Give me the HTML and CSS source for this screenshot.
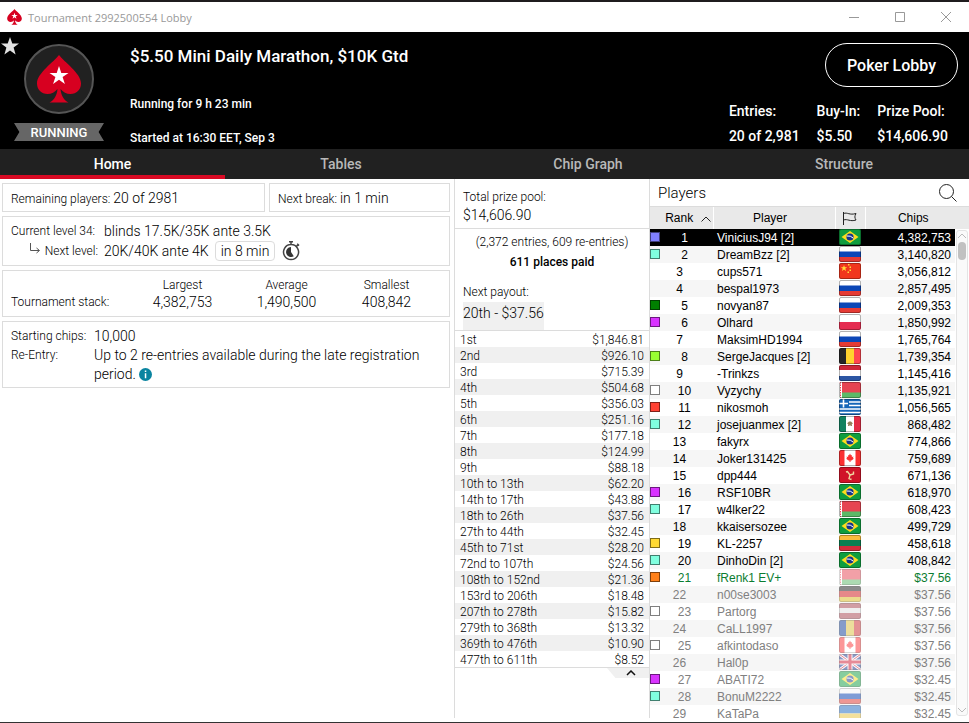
FILE: index.html
```html
<!DOCTYPE html>
<html lang="en">
<head>
<meta charset="utf-8">
<title>Tournament 2992500554 Lobby</title>
<link rel="stylesheet" href="styles.css">
</head>
<body>
<svg class="defs" aria-hidden="true">
  <symbol id="spade" viewBox="0 0 44 48"><path fill="#d70020" d="M22 0C17 7 0 18 0 28.500c0 6 4.500 10.500 10.500 10.500 4 0 7.500-2 10-5-.5 6-3 11-8 13.500h19c-5-2.500-7.500-7.500-8-13.500 2.500 3 6 5 10 5C39.500 39 44 34.500 44 28.500 44 18 27 7 22 0z"/><path fill="#fff" d="M22 11l2.300 6.900h7.200l-5.900 4.200 2.300 6.900-5.900-4.300-5.900 4.300 2.300-6.900-5.900-4.200h7.200z"/></symbol>
  <symbol id="br" viewBox="0 0 22 16"><path fill="#0f9d3f" d="M0 0h22v16H0z"/><path fill="#fddc1d" d="M11 2l8.500 6-8.500 6-8.500-6z"/><circle cx="11" cy="8" r="3.600" fill="#17348c"/><path d="M7.600 7q4-.7 6.800 2.200" stroke="#fff" fill="none"/></symbol>
  <symbol id="ru" viewBox="0 0 22 16"><path fill="#fff" d="M0 0h22v6H0z"/><path fill="#0c47b7" d="M0 5.500h22V11H0z"/><path fill="#e53b35" d="M0 11h22v5H0z"/></symbol>
  <symbol id="cn" viewBox="0 0 22 16"><path fill="#f1361d" d="M0 0h22v16H0z"/><path fill="#ffde3a" d="M5 2l.8 2.200h2.400L6.300 5.600 7 8 5 6.600 3 8l.7-2.400L1.800 4.200h2.400zM9 1h1.500v1.500H9zM10.500 3.500H12V5h-1.500zM10.500 6.500H12V8h-1.500zM8.500 8.500H10V10H8.500z"/></symbol>
  <symbol id="pl" viewBox="0 0 22 16"><path fill="#fff" d="M0 0h22v8H0z"/><path fill="#e52c50" d="M0 8h22v8H0z"/></symbol>
  <symbol id="be" viewBox="0 0 22 16"><path fill="#262626" d="M0 0h8v16H0z"/><path fill="#ffd22e" d="M7 0h8v16H7z"/><path fill="#ff4550" d="M15 0h7v16h-7z"/></symbol>
  <symbol id="nl" viewBox="0 0 22 16"><path fill="#cc2638" d="M0 0h22v5H0z"/><path fill="#fff" d="M0 5h22v6H0z"/><path fill="#2c56a4" d="M0 11h22v5H0z"/></symbol>
  <symbol id="by" viewBox="0 0 22 16"><path fill="#e64452" d="M0 0h22v11H0z"/><path fill="#5cb967" d="M0 10.500h22V16H0z"/><path fill="#fff" d="M0 0h3v16H0z"/><path d="M1.500 0v16" stroke="#e64452" stroke-dasharray="1.500 1"/></symbol>
  <symbol id="gr" viewBox="0 0 22 16"><path fill="#1767b8" d="M0 0h22v16H0z"/><path stroke="#fff" stroke-width="1.600" d="M10 3h12M10 6.500h12M0 10h22M0 13.500h22M0 4.500h9M4.500 0v8.500"/></symbol>
  <symbol id="mx" viewBox="0 0 22 16"><path fill="#128260" d="M0 0h7v16H0z"/><path fill="#fff" d="M7 0h8v16H7z"/><path fill="#e22c45" d="M15 0h7v16h-7z"/><path fill="#94805c" d="M10 5.500h2l2 2-1.200.5.200 2h-1.200L11 9l-.8 1H9l.2-2L8 7.500z"/></symbol>
  <symbol id="ca" viewBox="0 0 22 16"><path fill="#fa3032" d="M0 0h22v16H0z"/><path fill="#fff" d="M5.500 0h11v16h-11z"/><path fill="#fa3032" d="M11 3.500l1 2 1-.5-.2 2 1.700-.5-.5 1.500.8.8-2.300 1.600h-1V12h-1v-1.600h-1L7.200 8.800 8 8l-.5-1.500 1.700.5L9 5l1 .5z"/></symbol>
  <symbol id="im" viewBox="0 0 22 16"><path fill="#d01329" d="M0 0h22v16H0z"/><path d="M11 8L8.500 4.500 7 5M11 8l3.500-1V4.500M11 8l-1 3.500 2.500 1" fill="none" stroke="#f0d5a0" stroke-width="1.400"/></symbol>
  <symbol id="lt" viewBox="0 0 22 16"><path fill="#fabc3d" d="M0 0h22v5H0z"/><path fill="#0b8052" d="M0 5h22v6H0z"/><path fill="#d22e3b" d="M0 11h22v5H0z"/></symbol>
  <symbol id="de" viewBox="0 0 22 16"><path fill="#222" d="M0 0h22v5H0z"/><path fill="#d81e1e" d="M0 5h22v6H0z"/><path fill="#e3c324" d="M0 11h22v5H0z"/></symbol>
  <symbol id="lv" viewBox="0 0 22 16"><path fill="#a4404c" d="M0 0h22v16H0z"/><path fill="#e0e0e0" d="M0 5h22v5H0z"/></symbol>
  <symbol id="ro" viewBox="0 0 22 16"><path fill="#1545a0" d="M0 0h7v16H0z"/><path fill="#e3c845" d="M7 0h8v16H7z"/><path fill="#d43035" d="M15 0h7v16h-7z"/></symbol>
  <symbol id="gb" viewBox="0 0 22 16"><path fill="#213c95" d="M0 0h22v16H0z"/><path stroke="#fff" stroke-width="3" d="M0 0l22 16M22 0L0 16"/><path stroke="#d8203a" d="M0 0l22 16M22 0L0 16"/><path stroke="#fff" stroke-width="5" d="M11 0v16M0 8h22"/><path stroke="#d8203a" stroke-width="3" d="M11 0v16M0 8h22"/></symbol>
  <symbol id="ua" viewBox="0 0 22 16"><path fill="#1a68c0" d="M0 0h22v8.500H0z"/><path fill="#e8c23a" d="M0 8.500h22V16H0z"/></symbol>
</svg>
<div class="window">
  <div class="titlebar">
    <svg class="title-icon"><use href="#spade"/></svg>
    <span class="title-text">Tournament 2992500554 Lobby</span>
    <button class="win-btn" aria-label="Minimize"><svg viewBox="0 0 12 12"><path d="M1 6.500h10"/></svg></button>
    <button class="win-btn" aria-label="Maximize"><svg viewBox="0 0 12 12"><path d="M1.500 1.500h9v9h-9z"/></svg></button>
    <button class="win-btn" aria-label="Close"><svg viewBox="0 0 12 12"><path d="M1 1l10 10M11 1L1 11"/></svg></button>
  </div>

  <header class="header">
    <button class="favorite" aria-label="Favorite"><svg viewBox="0 0 18 18"><path fill="#e2e2e2" d="M9 0l2.300 6.500H18l-5.400 4.100 2 6.900L9 13.400l-5.600 4.100 2-6.900L0 6.500h6.700z"/></svg></button>
    <div class="badge">
      <div class="emblem"><svg><use href="#spade"/></svg></div>
      <div class="ribbon">RUNNING</div>
    </div>
    <div class="summary">
      <h1>$5.50 Mini Daily Marathon, $10K Gtd</h1>
      <p>Running for 9 h 23 min</p>
      <p>Started at 16:30 EET, Sep 3</p>
    </div>
    <div class="header-right">
      <button class="lobby-btn">Poker Lobby</button>
      <dl class="stats">
        <div><dt>Entries:</dt><dd>20 of 2,981</dd></div>
        <div><dt>Buy-In:</dt><dd>$5.50</dd></div>
        <div><dt>Prize Pool:</dt><dd>$14,606.90</dd></div>
      </dl>
    </div>
  </header>

  <nav class="tabs">
    <a class="active" href="#home">Home</a>
    <a href="#tables">Tables</a>
    <a href="#graph">Chip Graph</a>
    <a href="#structure">Structure</a>
  </nav>

  <main class="content">
    <section class="info">
      <div class="pair">
        <div class="card line">Remaining players: <b>20 of 2981</b></div>
        <div class="card line">Next break: <b>in 1 min</b></div>
      </div>
      <div class="card levels">
        <span class="lbl">Current level 34:</span><b>blinds 17.5K/35K ante 3.5K</b>
        <span class="lbl next"><svg viewBox="0 0 12 12"><path d="M1.500 0v7.500H10M7.500 5l3 2.500-3 2.500"/></svg>Next level:</span>
        <div class="next-value"><b>20K/40K ante 4K</b><b class="chip">in 8 min</b>
          <svg class="clock" viewBox="0 0 18 20"><path fill="none" stroke="#444" stroke-width="1.500" d="M9 3.500a7.500 7.500 0 1 0 .1 0zM9 3.500V1M7 .8h4M14.500 5.500l1.800-1.800M15.200 2.800l1.800 1.800"/><path fill="#333" d="M9 6v5l2.800 4.200A5 5 0 1 1 9 6z"/></svg>
        </div>
      </div>
      <div class="card stack">
        <span></span><span>Largest</span><span>Average</span><span>Smallest</span>
        <span class="lbl">Tournament stack:</span><b>4,382,753</b><b>1,490,500</b><b>408,842</b>
      </div>
      <div class="card entry">
        <span class="lbl">Starting chips:</span><b>10,000</b>
        <span class="lbl">Re-Entry:</span>
        <b>Up to 2 re-entries available during the late registration period. <svg class="info-icon" viewBox="0 0 13 13"><circle cx="6.500" cy="6.500" r="6.500" fill="#0a84a0"/><path fill="#fff" d="M5.800 2.500h1.500V4H5.800zM5.800 5.200h1.500v5H5.800z"/></svg></b>
      </div>
    </section>

    <section class="prizes">
      <div class="pool"><span>Total prize pool:</span><b>$14,606.90</b></div>
      <div class="places">
        <p class="mid">(2,372 entries, 609 re-entries)</p>
        <p class="mid strong">611 places paid</p>
        <p class="payout-label">Next payout:</p>
        <b class="payout">20th - $37.56</b>
      </div>
      <table class="payouts">
        <tbody>
        <tr><td>1st</td><td>$1,846.81</td></tr>
        <tr><td>2nd</td><td>$926.10</td></tr>
        <tr><td>3rd</td><td>$715.39</td></tr>
        <tr><td>4th</td><td>$504.68</td></tr>
        <tr><td>5th</td><td>$356.03</td></tr>
        <tr><td>6th</td><td>$251.16</td></tr>
        <tr><td>7th</td><td>$177.18</td></tr>
        <tr><td>8th</td><td>$124.99</td></tr>
        <tr><td>9th</td><td>$88.18</td></tr>
        <tr><td>10th to 13th</td><td>$62.20</td></tr>
        <tr><td>14th to 17th</td><td>$43.88</td></tr>
        <tr><td>18th to 26th</td><td>$37.56</td></tr>
        <tr><td>27th to 44th</td><td>$32.45</td></tr>
        <tr><td>45th to 71st</td><td>$28.20</td></tr>
        <tr><td>72nd to 107th</td><td>$24.56</td></tr>
        <tr><td>108th to 152nd</td><td>$21.36</td></tr>
        <tr><td>153rd to 206th</td><td>$18.48</td></tr>
        <tr><td>207th to 278th</td><td>$15.82</td></tr>
        <tr><td>279th to 368th</td><td>$13.32</td></tr>
        <tr><td>369th to 476th</td><td>$10.90</td></tr>
        <tr><td>477th to 611th</td><td>$8.52</td></tr>
        </tbody>
      </table>
      <button class="collapse" aria-label="Collapse payouts"><svg viewBox="0 0 10 6"><path d="M1 5l4-4 4 4"/></svg></button>
    </section>

    <section class="players">
      <div class="players-head">
        <h2>Players</h2>
        <button aria-label="Search players"><svg viewBox="0 0 18 18"><circle cx="7.500" cy="7.500" r="7"/><path d="M12.500 12.500l5 5"/></svg></button>
      </div>
      <div class="list">
        <table>
          <colgroup><col class="c-rank"><col class="c-name"><col class="c-flag"><col><col class="c-bar"></colgroup>
          <thead><tr>
            <th class="th-rank">Rank <svg viewBox="0 0 10 6"><path d="M.5 5.500L5 1l4.500 4.500"/></svg></th>
            <th class="th-name">Player</th>
            <th><svg class="flag-head" viewBox="0 0 14 13"><path d="M.5 0v13M.5 1.500c4-1.500 6 2 12.500 0-1.500 3-1.500 4 0 6.500-6 2-8.500-1.500-12.500 0"/></svg></th>
            <th class="th-chips" colspan="2">Chips</th>
          </tr></thead>
          <tbody>
          <tr class="selected"><td><div class="rank"><i class="blue"></i><span>1</span></div></td><td>ViniciusJ94 [2]</td><td><svg class="flag"><use href="#br"/></svg></td><td>4,382,753</td></tr>
          <tr><td><div class="rank"><i class="aqua"></i><span>2</span></div></td><td>DreamBzz [2]</td><td><svg class="flag"><use href="#ru"/></svg></td><td>3,140,820</td></tr>
          <tr><td><div class="rank"><span>3</span></div></td><td>cups571</td><td><svg class="flag"><use href="#cn"/></svg></td><td>3,056,812</td></tr>
          <tr><td><div class="rank"><span>4</span></div></td><td>bespal1973</td><td><svg class="flag"><use href="#ru"/></svg></td><td>2,857,495</td></tr>
          <tr><td><div class="rank"><i class="green"></i><span>5</span></div></td><td>novyan87</td><td><svg class="flag"><use href="#ru"/></svg></td><td>2,009,353</td></tr>
          <tr><td><div class="rank"><i class="purple"></i><span>6</span></div></td><td>Olhard</td><td><svg class="flag"><use href="#pl"/></svg></td><td>1,850,992</td></tr>
          <tr><td><div class="rank"><span>7</span></div></td><td>MaksimHD1994</td><td><svg class="flag"><use href="#ru"/></svg></td><td>1,765,764</td></tr>
          <tr><td><div class="rank"><i class="lime"></i><span>8</span></div></td><td>SergeJacques [2]</td><td><svg class="flag"><use href="#be"/></svg></td><td>1,739,354</td></tr>
          <tr><td><div class="rank"><span>9</span></div></td><td>-Trinkzs</td><td><svg class="flag"><use href="#nl"/></svg></td><td>1,145,416</td></tr>
          <tr><td><div class="rank"><i class="white"></i><span>10</span></div></td><td>Vyzychy</td><td><svg class="flag"><use href="#by"/></svg></td><td>1,135,921</td></tr>
          <tr><td><div class="rank"><i class="red"></i><span>11</span></div></td><td>nikosmoh</td><td><svg class="flag"><use href="#gr"/></svg></td><td>1,056,565</td></tr>
          <tr><td><div class="rank"><i class="aqua"></i><span>12</span></div></td><td>josejuanmex [2]</td><td><svg class="flag"><use href="#mx"/></svg></td><td>868,482</td></tr>
          <tr><td><div class="rank"><span>13</span></div></td><td>fakyrx</td><td><svg class="flag"><use href="#br"/></svg></td><td>774,866</td></tr>
          <tr><td><div class="rank"><span>14</span></div></td><td>Joker131425</td><td><svg class="flag"><use href="#ca"/></svg></td><td>759,689</td></tr>
          <tr><td><div class="rank"><span>15</span></div></td><td>dpp444</td><td><svg class="flag"><use href="#im"/></svg></td><td>671,136</td></tr>
          <tr><td><div class="rank"><i class="purple"></i><span>16</span></div></td><td>RSF10BR</td><td><svg class="flag"><use href="#br"/></svg></td><td>618,970</td></tr>
          <tr><td><div class="rank"><i class="aqua"></i><span>17</span></div></td><td>w4lker22</td><td><svg class="flag"><use href="#by"/></svg></td><td>608,423</td></tr>
          <tr><td><div class="rank"><span>18</span></div></td><td>kkaisersozee</td><td><svg class="flag"><use href="#br"/></svg></td><td>499,729</td></tr>
          <tr><td><div class="rank"><i class="yellow"></i><span>19</span></div></td><td>KL-2257</td><td><svg class="flag"><use href="#lt"/></svg></td><td>458,618</td></tr>
          <tr><td><div class="rank"><i class="aqua"></i><span>20</span></div></td><td>DinhoDin [2]</td><td><svg class="flag"><use href="#br"/></svg></td><td>408,842</td></tr>
          <tr class="out me"><td><div class="rank"><i class="orange"></i><span>21</span></div></td><td>fRenk1 EV+</td><td><svg class="flag"><use href="#by"/></svg></td><td>$37.56</td></tr>
          <tr class="out"><td><div class="rank"><span>22</span></div></td><td>n00se3003</td><td><svg class="flag"><use href="#de"/></svg></td><td>$37.56</td></tr>
          <tr class="out"><td><div class="rank"><i class="white"></i><span>23</span></div></td><td>Partorg</td><td><svg class="flag"><use href="#lv"/></svg></td><td>$37.56</td></tr>
          <tr class="out"><td><div class="rank"><span>24</span></div></td><td>CaLL1997</td><td><svg class="flag"><use href="#ro"/></svg></td><td>$37.56</td></tr>
          <tr class="out"><td><div class="rank"><i class="white"></i><span>25</span></div></td><td>afkintodaso</td><td><svg class="flag"><use href="#ca"/></svg></td><td>$37.56</td></tr>
          <tr class="out"><td><div class="rank"><span>26</span></div></td><td>Hal0p</td><td><svg class="flag"><use href="#gb"/></svg></td><td>$37.56</td></tr>
          <tr class="out"><td><div class="rank"><i class="purple"></i><span>27</span></div></td><td>ABATI72</td><td><svg class="flag"><use href="#br"/></svg></td><td>$32.45</td></tr>
          <tr class="out"><td><div class="rank"><i class="aqua"></i><span>28</span></div></td><td>BonuM2222</td><td><svg class="flag"><use href="#ru"/></svg></td><td>$32.45</td></tr>
          <tr class="out"><td><div class="rank"><span>29</span></div></td><td>KaTaPa</td><td><svg class="flag"><use href="#ua"/></svg></td><td>$32.45</td></tr>
          </tbody>
        </table>
        <div class="scrollbar">
          <svg viewBox="0 0 10 6"><path d="M1 5l4-4 4 4"/></svg>
          <div class="thumb"></div>
          <svg viewBox="0 0 10 6"><path d="M1 1l4 4 4-4"/></svg>
        </div>
      </div>
    </section>
  </main>
</div>
</body>
</html>
```
FILE: styles.css
```css
* { box-sizing: border-box; }
body { margin: 0; font-family: Roboto, "Liberation Sans", sans-serif; font-size: 12px; color: #000; }
h1, h2, p, dl, dd { margin: 0; font-weight: inherit; }
button { margin: 0; padding: 0; border: 0; background: none; color: inherit; font: inherit; }
svg { display: block; }
a { color: inherit; text-decoration: none; }
table { border-collapse: collapse; width: 100%; }
td, th { padding: 0; font-weight: inherit; }
.defs { position: absolute; width: 0; height: 0; }

.window { height: 100vh; display: flex; flex-direction: column; background: #fff; border-top: 2px solid #1f1c1e; border-bottom: 1px solid #333; }

.titlebar { display: flex; align-items: center; height: 30px; flex: none; padding-left: 7px; color: #999; font: 11px "Open Sans", sans-serif; }
.title-icon { width: 15px; height: 16px; margin-right: 6px; }
.title-text { flex: 1; }
.win-btn { width: 46px; height: 30px; display: grid; place-items: center; }
.win-btn svg { width: 12px; height: 12px; fill: none; stroke: #999; }

.header { position: relative; display: flex; height: 117px; flex: none; background: #000; color: #fff; font-weight: 500; }
.favorite { position: absolute; left: 1px; top: 5px; }
.favorite svg { width: 18px; height: 18px; }
.badge { width: 118px; padding-top: 12px; display: flex; flex-direction: column; align-items: center; gap: 9px; }
.emblem { width: 70px; height: 70px; border: 2px solid #555; border-radius: 50%; background: #212121; display: grid; place-items: center; }
.emblem svg { width: 44px; height: 48px; }
.ribbon { width: 90px; height: 18px; background: #666; clip-path: polygon(0 0, 100% 0, 94% 50%, 100% 100%, 0 100%, 6% 50%); text-align: center; font-size: 13px; line-height: 19px; }
.summary { flex: 1; padding: 14px 0 0 12px; }
.summary h1 { font-size: 17px; line-height: 20px; margin-bottom: 28px; }
.summary p { line-height: 20px; margin-bottom: 14px; }
.header-right { display: flex; flex-direction: column; align-items: flex-end; padding: 11px 11px 0 0; }
.lobby-btn { width: 133px; height: 44px; border: 1px solid #fff; border-radius: 22px; font-size: 16px; }
.stats { display: flex; gap: 17px; padding-right: 10px; font-size: 14px; line-height: 25px; margin-top: 12px; }

.tabs { display: grid; grid-template-columns: 225fr 232fr 262fr 250fr; flex: none; height: 30px; background: #212121; color: #b8b8b8; font-weight: 500; font-size: 14px; line-height: 30px; text-align: center; }
.tabs .active { color: #fff; box-shadow: inset 0 -4px #d90a24; }

.content { flex: 1; min-height: 0; display: grid; grid-template-columns: minmax(0, 1fr) 196px 319px; font-weight: 300; padding-bottom: 4px; }
.content b { font-weight: 300; font-size: 14px; }

.info { padding: 4px 4px 0 2px; display: flex; flex-direction: column; gap: 4px; }
.card { border: 1px solid #dcdcdc; padding: 0 8px; }
.pair { display: grid; grid-template-columns: 263fr 181fr; gap: 4px; }
.line { height: 29px; line-height: 28px; }
.levels { display: grid; grid-template-columns: 93px 1fr; line-height: 20px; padding-top: 4px; padding-bottom: 4px; }
.next { display: flex; justify-content: flex-end; gap: 4px; padding-right: 6px; }
.next svg { width: 12px; height: 12px; margin-top: 2px; fill: none; stroke: #555; }
.next-value { display: flex; align-items: center; height: 20px; }
.chip { border: 1px solid #dcdcdc; border-radius: 4px; padding: 0 5px; line-height: 18px; margin: 0 7px 0 6px; }
.clock { width: 18px; height: 20px; }
.stack { display: grid; grid-template-columns: 121px 101px 107px 1fr; line-height: 17px; padding-top: 6px; padding-bottom: 5px; }
.stack span:not(.lbl), .stack b { text-align: center; }
.stack :nth-child(4n) { padding-right: 8px; }
.entry { display: grid; grid-template-columns: 83px 1fr; line-height: 19px; padding-top: 5px; padding-bottom: 3px; }
.info-icon { display: inline; width: 13px; height: 13px; vertical-align: -2px; }

.prizes { border: solid #dcdcdc; border-width: 0 1px; font-size: 12px; }
.pool { display: grid; line-height: 18px; padding: 9px 8px 4px; border-bottom: 1px solid #dcdcdc; }
.places { padding: 3px 8px 0; line-height: 20px; border-bottom: 1px solid #dcdcdc; }
.mid { text-align: center; }
.strong { font-weight: 500; }
.payout-label { margin-top: 10px; }
.payout { display: table; height: 28px; line-height: 22px; background: #f0f0f0; }
.payouts td { height: 16px; line-height: 14px; padding: 2px 5px 0; }
.payouts td:last-child { text-align: right; }
.payouts tr:nth-child(even) { background: #f0f0f0; }
.payouts { border-bottom: 1px solid #dcdcdc; }
.collapse { display: grid; place-items: center; margin-left: auto; width: 42px; height: 10px; padding-left: 6px; background: #f0f0f0; clip-path: polygon(0 0, 100% 0, 100% 100%, 20% 100%); }
.collapse svg { width: 10px; height: 6px; fill: none; stroke: #111; stroke-width: 1.5; }

.players { display: flex; flex-direction: column; min-height: 0; }
.players-head { display: flex; justify-content: space-between; align-items: center; flex: none; height: 28px; padding: 0 12px 0 8px; border-bottom: 1px solid #dcdcdc; }
.players-head h2 { font-size: 15px; }
.players-head svg { width: 18px; height: 18px; fill: none; stroke: #222; }
.list { position: relative; flex: 1; min-height: 0; overflow: hidden; font: 12px "Liberation Sans", Arial, sans-serif; }
.list table { table-layout: fixed; }
.c-rank { width: 63px; }
.c-name { width: 122px; }
.c-flag { width: 30px; }
.c-bar { width: 14px; }
.list th { height: 22px; background: #e9e9e9; border-right: 1px solid #fff; }
.list th svg { display: inline; fill: none; stroke: #222; width: 10px; height: 6px; margin-left: 4px; }
.list th .flag-head { width: 14px; height: 13px; margin: 0; vertical-align: middle; }
.list .th-rank { text-align: right; padding-right: 2px; }
.list .th-name { padding-right: 8px; }
.list .th-chips { border: 0; padding-right: 8px; }
.list td { height: 17px; line-height: 15px; padding-top: 2px; }
.list tr:nth-child(even) td { background: #f6f6f6; }
.list .selected td { background: #000; color: #fff; }
.list td:nth-child(2) { padding-left: 4px; }
.list td:nth-child(3) { padding-top: 0; vertical-align: top; }
.list td:nth-child(4) { padding-right: 4px; text-align: right; }
.rank { display: flex; align-items: flex-start; padding-right: 4px; }
.rank span { flex: 1; text-align: center; }
.rank i { width: 10px; height: 10px; margin-top: 1px; border: 1px solid rgba(0, 0, 0, .5); }
.blue { background: #8080ff; }
.aqua { background: #80ffdf; }
.green { background: #008000; }
.purple { background: #d933ff; }
.lime { background: #99ff33; }
.white { background: #fff; }
.red { background: #ff4133; }
.yellow { background: #ffd933; }
.orange { background: #ff8019; }
.flag { width: 22px; height: 16px; margin: 0 auto; outline: 1px solid rgba(0, 0, 0, .3); outline-offset: -1px; border-radius: 2px; }
.out { color: #808080; }
.me { color: #0b7d31; }
.out .flag { opacity: .5; }
.scrollbar { position: absolute; top: 23px; right: 1px; bottom: 2px; width: 12px; display: flex; flex-direction: column; align-items: center; border: 1px solid #e4e4e4; border-radius: 3px; background: #fafafa; padding: 2px 0; }
.scrollbar svg { width: 10px; height: 6px; fill: none; stroke: #bbb; }
.thumb { width: 8px; height: 18px; margin: 3px 0 auto; border-radius: 4px; background: #c1c1c1; }
```
